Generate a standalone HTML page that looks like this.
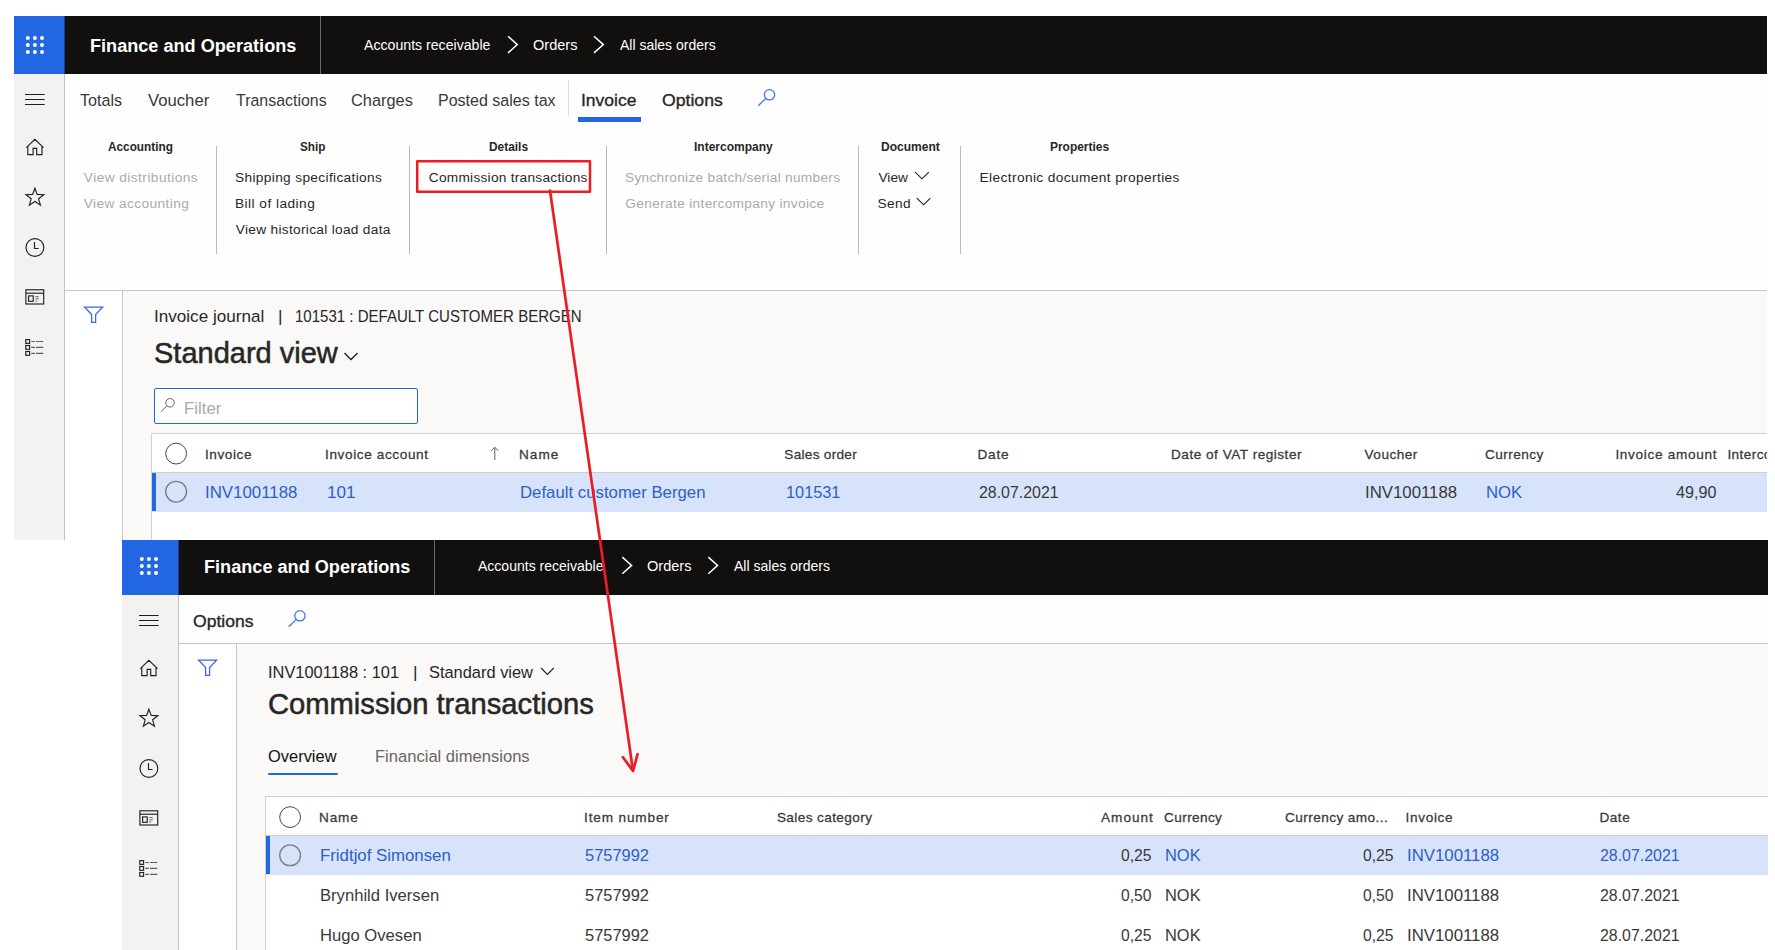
<!DOCTYPE html>
<html lang="en"><head><meta charset="utf-8"><title>Commission transactions</title>
<style>
html,body{margin:0;padding:0;background:#fff}
body{width:1775px;height:950px;position:relative;overflow:hidden;font-family:"Liberation Sans",sans-serif}
#c div,#c span,#c svg{position:absolute}
#c span{white-space:pre;line-height:40px;transform-origin:0 0}
</style></head><body><div id="c">
<div style="left:14px;top:16px;width:50px;height:58px;background:#2266e3;"></div>
<div style="left:64px;top:16px;width:1703px;height:58px;background:#11100f;"></div>
<div style="left:320px;top:16px;width:1px;height:58px;background:#6b6a69;"></div>
<div style="left:64px;top:16px;width:1px;height:58px;background:#1a3f8c;"></div>
<div style="left:14px;top:74px;width:50px;height:466px;background:#f3f2f1;"></div>
<div style="left:64px;top:74px;width:1px;height:466px;background:#c4c2c0;"></div>
<div style="left:65px;top:74px;width:1702px;height:216px;background:#fefefe;"></div>
<div style="left:65px;top:290px;width:1702px;height:1px;background:#c8c6c4;"></div>
<div style="left:65px;top:291px;width:57px;height:249px;background:#fff;"></div>
<div style="left:122px;top:291px;width:1px;height:249px;background:#c8c6c4;"></div>
<div style="left:123px;top:291px;width:1644px;height:249px;background:#faf9f8;"></div>
<div style="left:568px;top:80px;width:1px;height:36px;background:#e1dfdd;"></div>
<div style="left:578px;top:117px;width:63px;height:4.5px;background:#2266e3;"></div>
<div style="left:216px;top:146px;width:1px;height:108px;background:#bcbab8;"></div>
<div style="left:409px;top:146px;width:1px;height:108px;background:#bcbab8;"></div>
<div style="left:606px;top:146px;width:1px;height:108px;background:#bcbab8;"></div>
<div style="left:858px;top:146px;width:1px;height:108px;background:#bcbab8;"></div>
<div style="left:960px;top:146px;width:1px;height:108px;background:#bcbab8;"></div>
<div style="left:154px;top:388px;width:264px;height:36px;background:#fff;box-sizing:border-box;border:1px solid #2266e3;border-radius:2px"></div>
<div style="left:151px;top:433px;width:1616px;height:107px;background:#fff;box-sizing:border-box;border-left:1px solid #d0cfce;border-top:1px solid #d0cfce"></div>
<div style="left:152px;top:472px;width:1615px;height:1px;background:#d0cfce;"></div>
<div style="left:152px;top:473px;width:1615px;height:39px;background:#d7e3fb;"></div>
<div style="left:152px;top:473px;width:4px;height:38px;background:#2266e3;"></div>
<div style="left:122px;top:540px;width:56px;height:55px;background:#2266e3;"></div>
<div style="left:178px;top:540px;width:1590px;height:55px;background:#11100f;"></div>
<div style="left:434px;top:540px;width:1px;height:55px;background:#6b6a69;"></div>
<div style="left:178px;top:540px;width:1px;height:55px;background:#1a3f8c;"></div>
<div style="left:122px;top:595px;width:56px;height:355px;background:#f3f2f1;"></div>
<div style="left:178px;top:595px;width:1px;height:355px;background:#c4c2c0;"></div>
<div style="left:179px;top:595px;width:1589px;height:48px;background:#fefefe;"></div>
<div style="left:179px;top:643px;width:1589px;height:1px;background:#c8c6c4;"></div>
<div style="left:179px;top:644px;width:57px;height:306px;background:#fff;"></div>
<div style="left:236px;top:644px;width:1px;height:306px;background:#c8c6c4;"></div>
<div style="left:237px;top:644px;width:1531px;height:306px;background:#faf9f8;"></div>
<div style="left:268.3px;top:773px;width:69.5px;height:2px;background:#2266e3;border-radius:1px"></div>
<div style="left:265px;top:796px;width:1503px;height:154px;background:#fff;box-sizing:border-box;border-left:1px solid #d0cfce;border-top:1px solid #d0cfce"></div>
<div style="left:266px;top:835px;width:1502px;height:1px;background:#d0cfce;"></div>
<div style="left:266px;top:836px;width:1502px;height:39px;background:#d7e3fb;"></div>
<div style="left:266px;top:836px;width:4px;height:38px;background:#2266e3;"></div>
<svg style="left:0;top:0" width="1775" height="950" viewBox="0 0 1775 950"><g transform="translate(0 0)" fill="#fff"><circle cx="27.8" cy="37.9" r="2"/><circle cx="27.8" cy="45" r="2"/><circle cx="27.8" cy="52.1" r="2"/><circle cx="34.9" cy="37.9" r="2"/><circle cx="34.9" cy="45" r="2"/><circle cx="34.9" cy="52.1" r="2"/><circle cx="42" cy="37.9" r="2"/><circle cx="42" cy="45" r="2"/><circle cx="42" cy="52.1" r="2"/></g><g transform="translate(114 521)" fill="#fff"><circle cx="27.8" cy="37.9" r="2"/><circle cx="27.8" cy="45" r="2"/><circle cx="27.8" cy="52.1" r="2"/><circle cx="34.9" cy="37.9" r="2"/><circle cx="34.9" cy="45" r="2"/><circle cx="34.9" cy="52.1" r="2"/><circle cx="42" cy="37.9" r="2"/><circle cx="42" cy="45" r="2"/><circle cx="42" cy="52.1" r="2"/></g><g transform="translate(0 0)" stroke="#201f1e" stroke-width="1.15" fill="none"><path d="M25 94.5H44.6M25 99.5H44.6M25 104.5H44.6" stroke-width="1"/><path d="M26.3 147.6L34.9 139.3L43.5 147.6M27.8 146.4V154.6H33.1V148.3H36.7V154.6H42V146.4"/><path d="M34.90 188.20L37.19 194.44L43.84 194.70L38.61 198.81L40.43 205.20L34.90 201.50L29.37 205.20L31.19 198.81L25.96 194.70L32.61 194.44Z"/><circle cx="34.9" cy="247.5" r="8.9"/><path d="M34.5 242V248.5H38.6"/><rect x="25.9" y="289.8" width="17.8" height="14.2"/><path d="M25.9 293.2H43.7"/><rect x="28.6" y="295.9" width="4.6" height="5.4"/><path d="M35.3 296.6H38.8M35.3 298.8H38.8M35.3 301H37.2" stroke-width="0.9" stroke="#605e5c"/><rect x="25.8" y="339.6" width="3.8" height="3.8"/><path d="M31.3 341.5H34.9M36 341.5H43.3" stroke="#605e5c"/><rect x="25.8" y="345.5" width="3.8" height="3.8"/><path d="M31.3 347.4H34.9M36 347.4H43.3" stroke="#605e5c"/><rect x="25.8" y="351.5" width="3.8" height="3.8"/><path d="M31.3 353.4H34.9M36 353.4H43.3" stroke="#605e5c"/></g><g transform="translate(114 521)" stroke="#201f1e" stroke-width="1.15" fill="none"><path d="M25 94.5H44.6M25 99.5H44.6M25 104.5H44.6" stroke-width="1"/><path d="M26.3 147.6L34.9 139.3L43.5 147.6M27.8 146.4V154.6H33.1V148.3H36.7V154.6H42V146.4"/><path d="M34.90 188.20L37.19 194.44L43.84 194.70L38.61 198.81L40.43 205.20L34.90 201.50L29.37 205.20L31.19 198.81L25.96 194.70L32.61 194.44Z"/><circle cx="34.9" cy="247.5" r="8.9"/><path d="M34.5 242V248.5H38.6"/><rect x="25.9" y="289.8" width="17.8" height="14.2"/><path d="M25.9 293.2H43.7"/><rect x="28.6" y="295.9" width="4.6" height="5.4"/><path d="M35.3 296.6H38.8M35.3 298.8H38.8M35.3 301H37.2" stroke-width="0.9" stroke="#605e5c"/><rect x="25.8" y="339.6" width="3.8" height="3.8"/><path d="M31.3 341.5H34.9M36 341.5H43.3" stroke="#605e5c"/><rect x="25.8" y="345.5" width="3.8" height="3.8"/><path d="M31.3 347.4H34.9M36 347.4H43.3" stroke="#605e5c"/><rect x="25.8" y="351.5" width="3.8" height="3.8"/><path d="M31.3 353.4H34.9M36 353.4H43.3" stroke="#605e5c"/></g><g stroke="#4272f2" stroke-width="1.25" fill="none"><circle cx="769.5" cy="94.8" r="5.15"/><path d="M765.70 98.60L758.30 105.70"/></g><g stroke="#4272f2" stroke-width="1.25" fill="none"><circle cx="299.9" cy="615.8" r="5.15"/><path d="M296.10 619.60L288.70 626.70"/></g><g stroke="#605e5c" stroke-width="1.0" fill="none"><circle cx="170.0" cy="402.8" r="4.22"/><path d="M166.88 405.92L160.82 411.74"/></g><path transform="translate(0 0)" d="M84.6 307.1H102.6L95.6 314.6V322.4H91.6V314.6Z" stroke="#3b66f0" stroke-width="1.3" fill="none" stroke-linejoin="miter"/><path transform="translate(114 353)" d="M84.6 307.1H102.6L95.6 314.6V322.4H91.6V314.6Z" stroke="#3b66f0" stroke-width="1.3" fill="none" stroke-linejoin="miter"/><path d="M508 36.3L517.3 44.6L508 52.900000000000006" stroke="#fff" stroke-width="1.5" fill="none"/><path d="M594 36.3L603.3 44.6L594 52.900000000000006" stroke="#fff" stroke-width="1.5" fill="none"/><path d="M622.3 557.1L631.5999999999999 565.4L622.3 573.6999999999999" stroke="#fff" stroke-width="1.5" fill="none"/><path d="M708.3 557.1L717.5999999999999 565.4L708.3 573.6999999999999" stroke="#fff" stroke-width="1.5" fill="none"/><path d="M915.2 172.2L922.0 178.79999999999998L928.8000000000001 172.2" stroke="#201f1e" stroke-width="1.1" fill="none"/><path d="M916.8 198.2L923.5999999999999 204.79999999999998L930.4 198.2" stroke="#201f1e" stroke-width="1.1" fill="none"/><path d="M344.5 353L351.0 359.5L357.5 353" stroke="#201f1e" stroke-width="1.3" fill="none"/><path d="M541 668L547.4 674.5L553.8 668" stroke="#201f1e" stroke-width="1.1" fill="none"/><path d="M494.8 460V447.3M491.3 450.8L494.8 447.3L498.3 450.8" stroke="#605e5c" stroke-width="1" fill="none"/><circle cx="176.1" cy="453.6" r="10.4" stroke="#4a4948" stroke-width="1" fill="none"/><circle cx="176.1" cy="491.7" r="10.4" stroke="#807e7c" stroke-width="1.35" fill="none"/><circle cx="290.1" cy="817.1" r="10.4" stroke="#4a4948" stroke-width="1" fill="none"/><circle cx="290.1" cy="855.3" r="10.4" stroke="#807e7c" stroke-width="1.35" fill="none"/></svg>
<span style="font-size:19.2px;color:#ffffff;top:26px;font-weight:700;left:90.20px;transform:scaleX(0.9440);">Finance and Operations</span>
<span style="font-size:15px;color:#ffffff;top:25px;left:364.28px;transform:scaleX(0.9420);">Accounts receivable</span>
<span style="font-size:15px;color:#ffffff;top:25px;left:532.96px;transform:scaleX(0.9706);">Orders</span>
<span style="font-size:15px;color:#ffffff;top:25px;left:619.88px;transform:scaleX(0.9326);">All sales orders</span>
<span style="font-size:17.4px;color:#3a3938;top:80px;left:79.74px;transform:scaleX(0.9259);">Totals</span>
<span style="font-size:17.4px;color:#3a3938;top:80px;left:147.84px;transform:scaleX(0.9596);">Voucher</span>
<span style="font-size:17.4px;color:#3a3938;top:80px;left:235.74px;transform:scaleX(0.9164);">Transactions</span>
<span style="font-size:17.4px;color:#3a3938;top:80px;left:351.06px;transform:scaleX(0.9402);">Charges</span>
<span style="font-size:17.4px;color:#3a3938;top:80px;left:438.18px;transform:scaleX(0.9216);">Posted sales tax</span>
<span style="font-size:17.4px;color:#282726;top:80px;-webkit-text-stroke:0.35px currentColor;left:581.32px;transform:scaleX(1.0054);">Invoice</span>
<span style="font-size:17.4px;color:#282726;top:80px;-webkit-text-stroke:0.35px currentColor;left:662.41px;transform:scaleX(1.0149);">Options</span>
<span style="font-size:12.3px;color:#282726;top:127px;font-weight:700;left:108.24px;transform:scaleX(0.9587);">Accounting</span>
<span style="font-size:12.3px;color:#282726;top:127px;font-weight:700;left:300.38px;transform:scaleX(0.9544);">Ship</span>
<span style="font-size:12.3px;color:#282726;top:127px;font-weight:700;left:488.69px;transform:scaleX(0.9678);">Details</span>
<span style="font-size:12.3px;color:#282726;top:127px;font-weight:700;left:693.68px;transform:scaleX(0.9771);">Intercompany</span>
<span style="font-size:12.3px;color:#282726;top:127px;font-weight:700;left:880.68px;transform:scaleX(0.9787);">Document</span>
<span style="font-size:12.3px;color:#282726;top:127px;font-weight:700;left:1050.29px;transform:scaleX(0.9713);">Properties</span>
<span style="font-size:13.7px;color:#acaaa8;top:158px;left:83.83px;letter-spacing:0.447px;">View distributions</span>
<span style="font-size:13.7px;color:#acaaa8;top:184px;left:83.83px;letter-spacing:0.392px;">View accounting</span>
<span style="font-size:13.7px;color:#282726;top:158px;left:235.00px;letter-spacing:0.347px;">Shipping specifications</span>
<span style="font-size:13.7px;color:#282726;top:184px;left:235.00px;letter-spacing:0.462px;">Bill of lading</span>
<span style="font-size:13.7px;color:#282726;top:210px;left:235.83px;letter-spacing:0.300px;">View historical load data</span>
<span style="font-size:13.7px;color:#282726;top:158px;left:428.76px;letter-spacing:0.262px;">Commission transactions</span>
<span style="font-size:13.7px;color:#acaaa8;top:158px;left:625.00px;letter-spacing:0.286px;">Synchronize batch/serial numbers</span>
<span style="font-size:13.7px;color:#acaaa8;top:184px;left:625.37px;letter-spacing:0.331px;">Generate intercompany invoice</span>
<span style="font-size:13.7px;color:#282726;top:158px;left:878.43px;letter-spacing:0.027px;">View</span>
<span style="font-size:13.7px;color:#282726;top:184px;left:877.60px;letter-spacing:0.333px;">Send</span>
<span style="font-size:13.7px;color:#282726;top:158px;left:979.60px;letter-spacing:0.386px;">Electronic document properties</span>
<span style="font-size:17.4px;color:#282726;top:296px;left:153.50px;transform:scaleX(0.9829);">Invoice journal</span>
<span style="font-size:17.4px;color:#282726;top:296px;left:278.04px;">|</span>
<span style="font-size:17.4px;color:#282726;top:296px;left:294.95px;transform:scaleX(0.8647);">101531 : DEFAULT CUSTOMER BERGEN</span>
<span style="font-size:30.3px;color:#282726;top:333px;-webkit-text-stroke:0.55px currentColor;left:153.92px;transform:scaleX(0.9571);">Standard view</span>
<span style="font-size:17.4px;color:#acaaa8;top:388px;left:184.12px;transform:scaleX(0.9696);">Filter</span>
<span style="font-size:13.6px;color:#3a3938;top:435px;-webkit-text-stroke:0.27px currentColor;left:205.00px;letter-spacing:0.562px;">Invoice</span>
<span style="font-size:13.6px;color:#3a3938;top:435px;-webkit-text-stroke:0.27px currentColor;left:325.00px;letter-spacing:0.612px;">Invoice account</span>
<span style="font-size:13.6px;color:#3a3938;top:435px;-webkit-text-stroke:0.27px currentColor;left:519.00px;letter-spacing:1.000px;">Name</span>
<span style="font-size:13.6px;color:#3a3938;top:435px;-webkit-text-stroke:0.27px currentColor;left:784.29px;letter-spacing:0.294px;">Sales order</span>
<span style="font-size:13.6px;color:#3a3938;top:435px;-webkit-text-stroke:0.27px currentColor;left:977.40px;letter-spacing:0.808px;">Date</span>
<span style="font-size:13.6px;color:#3a3938;top:435px;-webkit-text-stroke:0.27px currentColor;left:1171.00px;letter-spacing:0.506px;">Date of VAT register</span>
<span style="font-size:13.6px;color:#3a3938;top:435px;-webkit-text-stroke:0.27px currentColor;left:1364.58px;letter-spacing:0.470px;">Voucher</span>
<span style="font-size:13.6px;color:#3a3938;top:435px;-webkit-text-stroke:0.27px currentColor;left:1485.12px;letter-spacing:0.434px;">Currency</span>
<span style="font-size:13.6px;color:#3a3938;top:435px;-webkit-text-stroke:0.27px currentColor;left:1615.40px;letter-spacing:0.695px;">Invoice amount</span>
<span style="font-size:13.6px;color:#3a3938;top:435px;-webkit-text-stroke:0.27px currentColor;left:1727.40px;letter-spacing:0.413px;width:39.6px;overflow:hidden;">Intercompany</span>
<span style="font-size:17px;color:#2d60c4;top:473px;left:205.13px;transform:scaleX(0.9916);">INV1001188</span>
<span style="font-size:17px;color:#2d60c4;top:473px;left:326.81px;transform:scaleX(1.0110);">101</span>
<span style="font-size:17px;color:#2d60c4;top:473px;left:520.13px;transform:scaleX(0.9865);">Default customer Bergen</span>
<span style="font-size:17px;color:#2d60c4;top:473px;left:785.87px;transform:scaleX(0.9595);">101531</span>
<span style="font-size:17px;color:#3a3938;top:473px;left:978.89px;transform:scaleX(0.9353);">28.07.2021</span>
<span style="font-size:17px;color:#3a3938;top:473px;left:1364.53px;transform:scaleX(0.9872);">INV1001188</span>
<span style="font-size:17px;color:#2d60c4;top:473px;left:1486.14px;transform:scaleX(0.9842);">NOK</span>
<span style="font-size:17px;color:#3a3938;top:473px;left:1675.73px;transform:scaleX(0.9493);">49,90</span>
<span style="font-size:19.2px;color:#ffffff;top:547px;font-weight:700;left:204.10px;transform:scaleX(0.9445);">Finance and Operations</span>
<span style="font-size:15px;color:#ffffff;top:546px;left:478.28px;transform:scaleX(0.9345);">Accounts receivable</span>
<span style="font-size:15px;color:#ffffff;top:546px;left:646.96px;transform:scaleX(0.9706);">Orders</span>
<span style="font-size:15px;color:#ffffff;top:546px;left:733.88px;transform:scaleX(0.9365);">All sales orders</span>
<span style="font-size:17.4px;color:#282726;top:601px;-webkit-text-stroke:0.35px currentColor;left:193.01px;transform:scaleX(1.0115);">Options</span>
<span style="font-size:17.4px;color:#282726;top:652px;left:267.96px;transform:scaleX(0.9434);">INV1001188 : 101</span>
<span style="font-size:17.4px;color:#282726;top:652px;left:413.04px;">|</span>
<span style="font-size:17.4px;color:#282726;top:652px;left:429.46px;transform:scaleX(0.9432);">Standard view</span>
<span style="font-size:30.3px;color:#282726;top:684px;-webkit-text-stroke:0.55px currentColor;left:267.88px;transform:scaleX(0.9625);">Commission transactions</span>
<span style="font-size:17.4px;color:#11100f;top:736px;left:268.26px;transform:scaleX(0.9458);">Overview</span>
<span style="font-size:17.4px;color:#686664;top:736px;left:374.74px;transform:scaleX(0.9522);">Financial dimensions</span>
<span style="font-size:13.6px;color:#3a3938;top:798px;-webkit-text-stroke:0.27px currentColor;left:319.00px;letter-spacing:0.867px;">Name</span>
<span style="font-size:13.6px;color:#3a3938;top:798px;-webkit-text-stroke:0.27px currentColor;left:584.00px;letter-spacing:0.854px;">Item number</span>
<span style="font-size:13.6px;color:#3a3938;top:798px;-webkit-text-stroke:0.27px currentColor;left:776.89px;letter-spacing:0.395px;">Sales category</span>
<span style="font-size:13.6px;color:#3a3938;top:798px;-webkit-text-stroke:0.27px currentColor;left:1101.00px;letter-spacing:1.000px;">Amount</span>
<span style="font-size:13.6px;color:#3a3938;top:798px;-webkit-text-stroke:0.27px currentColor;left:1164.12px;letter-spacing:0.376px;">Currency</span>
<span style="font-size:13.6px;color:#3a3938;top:798px;-webkit-text-stroke:0.27px currentColor;left:1285.12px;letter-spacing:0.424px;">Currency amo...</span>
<span style="font-size:13.6px;color:#3a3938;top:798px;-webkit-text-stroke:0.27px currentColor;left:1405.60px;letter-spacing:0.662px;">Invoice</span>
<span style="font-size:13.6px;color:#3a3938;top:798px;-webkit-text-stroke:0.27px currentColor;left:1599.40px;letter-spacing:0.542px;">Date</span>
<span style="font-size:17px;color:#2d60c4;top:836px;left:319.73px;transform:scaleX(0.9890);">Fridtjof Simonsen</span>
<span style="font-size:17px;color:#2d60c4;top:836px;left:585.03px;transform:scaleX(0.9665);">5757992</span>
<span style="font-size:17px;color:#3a3938;top:836px;left:1121.44px;transform:scaleX(0.9230);">0,25</span>
<span style="font-size:17px;color:#2d60c4;top:836px;left:1164.76px;transform:scaleX(0.9671);">NOK</span>
<span style="font-size:17px;color:#3a3938;top:836px;left:1363.44px;transform:scaleX(0.9230);">0,25</span>
<span style="font-size:17px;color:#2d60c4;top:836px;left:1406.53px;transform:scaleX(0.9872);">INV1001188</span>
<span style="font-size:17px;color:#2d60c4;top:836px;left:1600.29px;transform:scaleX(0.9353);">28.07.2021</span>
<span style="font-size:17px;color:#3a3938;top:876px;left:319.74px;transform:scaleX(0.9773);">Brynhild Iversen</span>
<span style="font-size:17px;color:#3a3938;top:876px;left:585.03px;transform:scaleX(0.9665);">5757992</span>
<span style="font-size:17px;color:#3a3938;top:876px;left:1121.44px;transform:scaleX(0.9203);">0,50</span>
<span style="font-size:17px;color:#3a3938;top:876px;left:1164.76px;transform:scaleX(0.9671);">NOK</span>
<span style="font-size:17px;color:#3a3938;top:876px;left:1363.44px;transform:scaleX(0.9203);">0,50</span>
<span style="font-size:17px;color:#3a3938;top:876px;left:1406.53px;transform:scaleX(0.9872);">INV1001188</span>
<span style="font-size:17px;color:#3a3938;top:876px;left:1600.29px;transform:scaleX(0.9353);">28.07.2021</span>
<span style="font-size:17px;color:#3a3938;top:916px;left:319.74px;transform:scaleX(0.9782);">Hugo Ovesen</span>
<span style="font-size:17px;color:#3a3938;top:916px;left:585.03px;transform:scaleX(0.9665);">5757992</span>
<span style="font-size:17px;color:#3a3938;top:916px;left:1121.44px;transform:scaleX(0.9230);">0,25</span>
<span style="font-size:17px;color:#3a3938;top:916px;left:1164.76px;transform:scaleX(0.9671);">NOK</span>
<span style="font-size:17px;color:#3a3938;top:916px;left:1363.44px;transform:scaleX(0.9230);">0,25</span>
<span style="font-size:17px;color:#3a3938;top:916px;left:1406.53px;transform:scaleX(0.9872);">INV1001188</span>
<span style="font-size:17px;color:#3a3938;top:916px;left:1600.29px;transform:scaleX(0.9353);">28.07.2021</span>
<svg style="left:0;top:0" width="1775" height="950" viewBox="0 0 1775 950" fill="none" stroke="#ed1c24" stroke-width="2.7" stroke-linecap="round" stroke-linejoin="round">
<rect x="417.2" y="161.2" width="172.8" height="30.6" stroke-width="2.5"/>
<path d="M550 190.5 L632.8 769.5"/>
<path d="M622.9 757.2 L633 771 L637.6 754.2"/>
</svg>
</div></body></html>
